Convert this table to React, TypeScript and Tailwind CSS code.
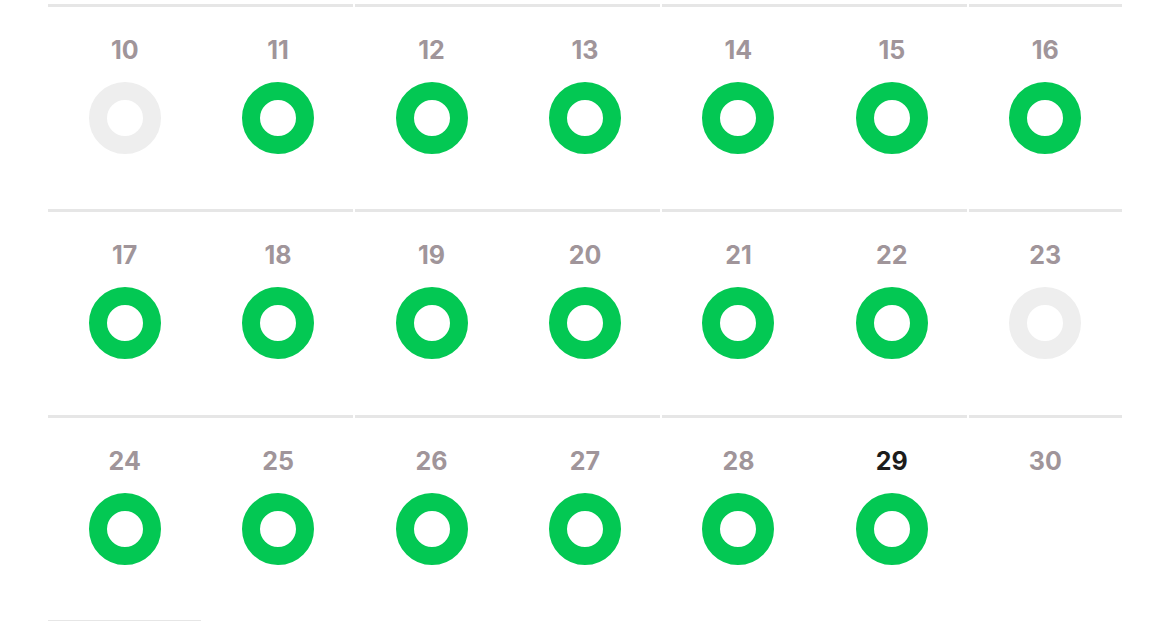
const rows: { day: number; status: "done" | "missed" | "none" }[][] = [
  [
    { day: 10, status: "missed" },
    { day: 11, status: "done" },
    { day: 12, status: "done" },
    { day: 13, status: "done" },
    { day: 14, status: "done" },
    { day: 15, status: "done" },
    { day: 16, status: "done" },
  ],
  [
    { day: 17, status: "done" },
    { day: 18, status: "done" },
    { day: 19, status: "done" },
    { day: 20, status: "done" },
    { day: 21, status: "done" },
    { day: 22, status: "done" },
    { day: 23, status: "missed" },
  ],
  [
    { day: 24, status: "done" },
    { day: 25, status: "done" },
    { day: 26, status: "done" },
    { day: 27, status: "done" },
    { day: 28, status: "done" },
    { day: 29, status: "done" },
    { day: 30, status: "none" },
  ],
];

const TODAY = 29;

const App = () => {
  return (
    <div
      className="w-[1170px] h-[621px] overflow-hidden bg-white pl-[48px] pt-[4px]"
      style={{ fontFamily: "Inter, 'Open Sans', sans-serif" }}
    >
      <div className="w-[1074px] grid grid-cols-7">
        {rows.flat().map((cell, i) => (
          <div key={cell.day} className="h-[205.4px] flex flex-col items-center">
            {/* top rule, split into pairs like the original */}
            <div
              className={`h-[3px] self-stretch bg-[#e6e6e6] ${
                (i % 7) % 2 === 1 ? "mr-[2px]" : ""
              }`}
            />
            <span
              className={`mt-[29px] text-[25px] leading-[28px] font-bold ${
                cell.day === TODAY ? "text-[#1c1c1c]" : "text-[#a0959a]"
              }`}
            >
              {cell.day}
            </span>
            {cell.status === "done" && (
              <div className="mt-[18px] w-[72px] h-[72px] rounded-full border-[18px] border-[#03c853]" />
            )}
            {cell.status === "missed" && (
              <div className="mt-[18px] w-[72px] h-[72px] rounded-full border-[18px] border-[#eeeeee]" />
            )}
          </div>
        ))}
        {/* next week row, only its rule shows */}
        <div className="h-[3px] bg-[#e6e6e6]" />
      </div>
    </div>
  );
};

export default App;
